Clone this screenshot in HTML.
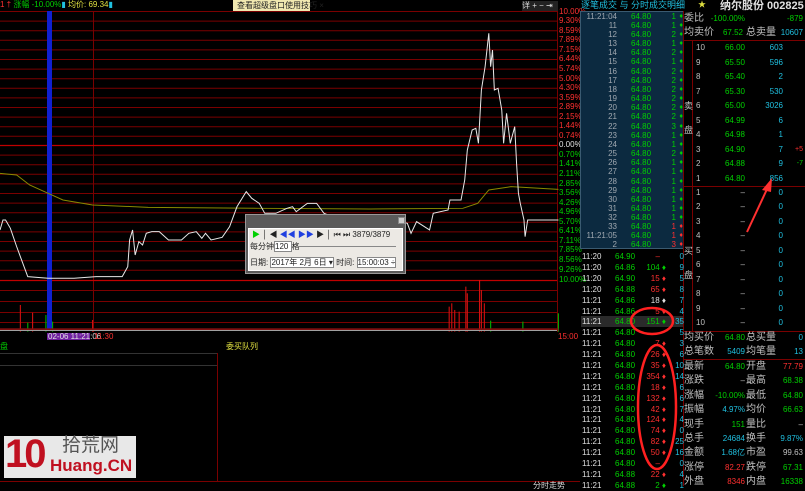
<!DOCTYPE html>
<html><head><meta charset="utf-8"><style>
*{margin:0;padding:0;box-sizing:border-box}
body{width:805px;height:486px;background:#000;overflow:hidden;position:relative;font-family:"Liberation Sans","Noto Sans CJK SC",sans-serif;font-size:8px;color:#ccc}
.a{position:absolute;white-space:nowrap;line-height:10px}
.g{color:#00d000}.r{color:#ff3030}.y{color:#e0e040}.c{color:#20c0e0}.w{color:#e0e0e0}.gr{color:#c0c0c0}
.ax{position:absolute;left:559px;font-size:8px;line-height:8px}
.lr{position:absolute;left:580px;width:104px;height:9px;font-size:8px;line-height:9px}
.lr span{position:absolute}
.t1{right:67px;color:#a0a8b0}.p1{left:51px;color:#00d000}.v1{right:8px}.ar1{right:1px;font-size:7px}
.br{position:absolute;left:580px;width:104px;height:11px;font-size:8px;line-height:11px}
.br span{position:absolute}
.rp{position:absolute;left:684px;width:121px;height:12px;font-size:8px;line-height:12px}
.rp span{position:absolute}
.cn{font-size:10px}
</style></head><body>

<svg class="a" style="left:0;top:0" width="580" height="340">
<g stroke="#7a0000" stroke-width="1">
<line x1="0" y1="11.5" x2="557" y2="11.5"/><line x1="0" y1="21.1" x2="557" y2="21.1"/><line x1="0" y1="30.7" x2="557" y2="30.7"/><line x1="0" y1="40.3" x2="557" y2="40.3"/><line x1="0" y1="49.9" x2="557" y2="49.9"/><line x1="0" y1="59.5" x2="557" y2="59.5"/><line x1="0" y1="69.1" x2="557" y2="69.1"/><line x1="0" y1="78.7" x2="557" y2="78.7"/><line x1="0" y1="88.3" x2="557" y2="88.3"/><line x1="0" y1="97.9" x2="557" y2="97.9"/><line x1="0" y1="107.5" x2="557" y2="107.5"/><line x1="0" y1="117.1" x2="557" y2="117.1"/><line x1="0" y1="126.7" x2="557" y2="126.7"/><line x1="0" y1="136.3" x2="557" y2="136.3"/>
<line x1="0" y1="155.1" x2="557" y2="155.1"/><line x1="0" y1="164.7" x2="557" y2="164.7"/><line x1="0" y1="174.3" x2="557" y2="174.3"/><line x1="0" y1="183.9" x2="557" y2="183.9"/><line x1="0" y1="193.5" x2="557" y2="193.5"/><line x1="0" y1="203.1" x2="557" y2="203.1"/><line x1="0" y1="212.7" x2="557" y2="212.7"/><line x1="0" y1="222.3" x2="557" y2="222.3"/><line x1="0" y1="231.9" x2="557" y2="231.9"/><line x1="0" y1="241.5" x2="557" y2="241.5"/><line x1="0" y1="251.1" x2="557" y2="251.1"/><line x1="0" y1="260.7" x2="557" y2="260.7"/><line x1="0" y1="270.3" x2="557" y2="270.3"/>
<line x1="0" y1="290.5" x2="557" y2="290.5"/><line x1="0" y1="301.5" x2="557" y2="301.5"/><line x1="0" y1="312.5" x2="557" y2="312.5"/><line x1="0" y1="322.5" x2="557" y2="322.5"/>
<line x1="93.5" y1="11" x2="93.5" y2="332"/><line x1="557.5" y1="11" x2="557.5" y2="332"/>
</g>
<line x1="0" y1="145.5" x2="557" y2="145.5" stroke="#c00000" stroke-width="1.3"/>
<line x1="0" y1="280.5" x2="557" y2="280.5" stroke="#c00000" stroke-width="1.3"/>
<rect x="47" y="11" width="5" height="320" fill="#1020d0"/>
<g transform="scale(0.3703,0.3333)" fill="none">
<polyline vector-effect="non-scaling-stroke" stroke="#8a8a00" stroke-width="1" points="0,520 45,525 80,555 130,580 170,600 250,615 400,622 700,625 1000,627 1250,625 1290,610 1320,570 1380,560 1508,568"/>
<polyline vector-effect="non-scaling-stroke" stroke="#e8e8e8" stroke-width="1" points="0,690 8,660 15,660 28,685 45,740 55,770 65,800 75,830 130,835 200,835 260,830 330,830 345,800 350,720 358,690 365,765 375,725 385,735 395,700 410,695 430,695 455,720 490,720 510,700 530,695 545,715 555,700 570,720 600,712 620,680 640,620 665,575 680,595 700,610 715,640 745,640 775,625 790,620 800,635 830,610 855,610 875,640 920,660 1000,665 1060,660 1100,670 1110,700 1125,665 1160,690 1170,640 1210,630 1215,600 1245,600 1255,540 1262,450 1275,390 1285,385 1292,430 1300,270 1310,200 1315,150 1320,100 1325,200 1330,150 1335,270 1345,265 1355,330 1360,430 1368,340 1378,430 1390,380 1395,490 1400,580 1405,610 1415,660 1418,710 1425,660 1508,660"/>
<g stroke="#d01010" stroke-width="3">
<line x1="55" y1="995" x2="55" y2="915"/><line x1="88" y1="995" x2="88" y2="938"/><line x1="1213" y1="995" x2="1213" y2="920"/><line x1="1220" y1="995" x2="1220" y2="910"/><line x1="1228" y1="995" x2="1228" y2="930"/><line x1="1240" y1="995" x2="1240" y2="935"/><line x1="1258" y1="995" x2="1258" y2="860"/><line x1="1262" y1="995" x2="1262" y2="880"/><line x1="1295" y1="995" x2="1295" y2="840"/><line x1="1300" y1="995" x2="1300" y2="870"/><line x1="1308" y1="995" x2="1308" y2="910"/><line x1="250" y1="995" x2="250" y2="960"/>
</g>
<g stroke="#00b000" stroke-width="3"><line x1="75" y1="995" x2="75" y2="968"/><line x1="124" y1="995" x2="124" y2="945"/><line x1="142" y1="995" x2="142" y2="965"/><line x1="1412" y1="995" x2="1412" y2="965"/><line x1="1508" y1="995" x2="1508" y2="940"/><line x1="1325" y1="995" x2="1325" y2="962"/></g>
<rect x="0" y="985" width="1508" height="8" fill="#801010"/>
</g>
<line x1="0" y1="330.5" x2="557" y2="330.5" stroke="#a0a0a0"/>
<line x1="0" y1="342.5" x2="580" y2="342.5" stroke="#7a0000"/>
<rect x="47" y="333" width="43" height="8" fill="#7020a0"/>
</svg>
<div class="a" style="left:48px;top:332px;font-size:8px;color:#e0e0e0">02-06 11:21:06</div>
<div class="a r" style="left:94px;top:332px;font-size:8px">11:30</div>
<div class="a r" style="left:558px;top:332px;font-size:8px">15:00</div>

<div class="ax r" style="top:8px">10.00%</div><div class="ax r" style="top:17px">9.30%</div><div class="ax r" style="top:27px">8.59%</div><div class="ax r" style="top:36px">7.89%</div><div class="ax r" style="top:46px">7.15%</div><div class="ax r" style="top:55px">6.44%</div><div class="ax r" style="top:65px">5.74%</div><div class="ax r" style="top:75px">5.00%</div><div class="ax r" style="top:84px">4.30%</div><div class="ax r" style="top:94px">3.59%</div><div class="ax r" style="top:103px">2.89%</div><div class="ax r" style="top:113px">2.15%</div><div class="ax r" style="top:122px">1.44%</div><div class="ax r" style="top:132px">0.74%</div><div class="ax w" style="top:141px">0.00%</div>
<div class="ax g" style="top:151px">0.70%</div><div class="ax g" style="top:160px">1.41%</div><div class="ax g" style="top:170px">2.11%</div><div class="ax g" style="top:180px">2.85%</div><div class="ax g" style="top:189px">3.56%</div><div class="ax g" style="top:199px">4.26%</div><div class="ax g" style="top:208px">4.96%</div><div class="ax g" style="top:218px">5.70%</div><div class="ax g" style="top:227px">6.41%</div><div class="ax g" style="top:237px">7.11%</div><div class="ax g" style="top:246px">7.85%</div><div class="ax g" style="top:256px">8.56%</div><div class="ax g" style="top:266px">9.26%</div><div class="ax g" style="top:276px">10.00%</div>

<div class="a" style="left:0;top:0;font-size:8px"><span class="r">1 †</span> <span class="g">涨幅 -10.00%</span><span class="c">▮</span> <span class="y">均价: 69.34</span><span class="c">▮</span></div>
<div class="a" style="left:233px;top:0;width:77px;height:11px;background:#f0e8b0;color:#222;font-size:8px;line-height:11px;padding-left:4px">查看超级盘口使用技巧 ×</div>
<div class="a" style="left:522px;top:1px;width:36px;height:10px;font-size:8px;color:#ddd;background:#222">详 + − ⇥</div>
<div class="a g" style="left:0;top:342px;font-size:8px">盘</div>
<div class="a y" style="left:226px;top:342px;font-size:8px">委买队列</div>
<div class="a" style="left:0;top:353px;width:217px;height:1px;background:#333"></div>
<div class="a" style="left:0;top:365px;width:217px;height:1px;background:#333"></div>
<div class="a" style="left:217px;top:353px;width:1px;height:128px;background:#7a0000"></div>
<div class="a" style="left:0;top:481px;width:580px;height:1px;background:#7a0000"></div>
<div class="a" style="left:533px;top:481px;font-size:8px;color:#ddd">分时走势</div>

<div class="a" style="left:4px;top:436px;width:132px;height:42px;background:#e8e8e8"></div>
<div class="a" style="left:5px;top:432px;font:bold 40px/44px 'Liberation Sans',sans-serif;color:#c01020;letter-spacing:-3px">10</div>
<div class="a" style="left:62px;top:436px;font-size:19px;line-height:20px;color:#555">拾荒网</div>
<div class="a" style="left:50px;top:456px;font:bold 17px/20px 'Liberation Sans',sans-serif;color:#c01020">Huang.CN</div>

<div class="a" style="left:245px;top:214px;width:161px;height:60px;background:#5a5a5a;border:1px solid #999"></div>
<div class="a" style="left:398px;top:217px;width:7px;height:7px;background:#ccc;border:1px solid #888"></div>
<div class="a" style="left:248px;top:228px;width:155px;height:43px;background:#ece9e4;border:1px solid #fff"></div>
<div class="a" style="left:252px;top:230px;font-size:8px;color:#222"><span class="g">▶</span> │ ◀ <span style="color:#2040e0">◀◀ ▶▶</span> ▶ │ ⏮ ⏭ 3879/3879</div>
<div class="a" style="left:250px;top:242px;font-size:8px;color:#222">每分钟<span style="background:#fff;border:1px solid #888">120 </span> 格</div>
<div class="a" style="left:298px;top:246px;width:98px;height:1px;background:#888"></div>
<div class="a" style="left:250px;top:258px;font-size:8px;color:#222">日期: <span style="background:#fff;border:1px solid #888">2017年 2月 6日 ▾</span> 时间: <span style="background:#fff;border:1px solid #888">15:00:03 ÷</span></div>

<div class="a c" style="left:581px;top:0;font-size:9px">逐笔成交 与 分时成交明细</div>
<div class="a y" style="left:698px;top:0">★</div>
<div class="a w" style="left:720px;top:0;font-size:11px;line-height:12px;font-weight:bold">纳尔股份 002825</div>
<div class="a" style="left:580px;top:11px;width:104px;height:238px;background:#0c2a40;border:1px solid #3a5a70"></div>
<div class="a" style="left:683px;top:11px;width:1px;height:475px;background:#7a0000"></div>

<div class="lr" style="top:12px"><span class="t1">11:21:04</span><span class="p1">64.80</span><span class="v1 g">1</span><span class="ar1 g">♦</span></div>
<div class="lr" style="top:21px"><span class="t1 y">11</span><span class="p1">64.80</span><span class="v1 g">1</span><span class="ar1 g">♦</span></div>
<div class="lr" style="top:30px"><span class="t1 y">12</span><span class="p1">64.80</span><span class="v1 g">2</span><span class="ar1 g">♦</span></div>
<div class="lr" style="top:39px"><span class="t1 y">13</span><span class="p1">64.80</span><span class="v1 g">1</span><span class="ar1 g">♦</span></div>
<div class="lr" style="top:48px"><span class="t1 y">14</span><span class="p1">64.80</span><span class="v1 g">2</span><span class="ar1 g">♦</span></div>
<div class="lr" style="top:57px"><span class="t1 y">15</span><span class="p1">64.80</span><span class="v1 g">1</span><span class="ar1 g">♦</span></div>
<div class="lr" style="top:67px"><span class="t1 y">16</span><span class="p1">64.80</span><span class="v1 g">2</span><span class="ar1 g">♦</span></div>
<div class="lr" style="top:76px"><span class="t1 y">17</span><span class="p1">64.80</span><span class="v1 g">2</span><span class="ar1 g">♦</span></div>
<div class="lr" style="top:85px"><span class="t1 y">18</span><span class="p1">64.80</span><span class="v1 g">2</span><span class="ar1 g">♦</span></div>
<div class="lr" style="top:94px"><span class="t1 y">19</span><span class="p1">64.80</span><span class="v1 g">2</span><span class="ar1 g">♦</span></div>
<div class="lr" style="top:103px"><span class="t1 y">20</span><span class="p1">64.80</span><span class="v1 g">2</span><span class="ar1 g">♦</span></div>
<div class="lr" style="top:112px"><span class="t1 y">21</span><span class="p1">64.80</span><span class="v1 g">2</span><span class="ar1 g">♦</span></div>
<div class="lr" style="top:122px"><span class="t1 y">22</span><span class="p1">64.80</span><span class="v1 g">3</span><span class="ar1 g">♦</span></div>
<div class="lr" style="top:131px"><span class="t1 y">23</span><span class="p1">64.80</span><span class="v1 g">1</span><span class="ar1 g">♦</span></div>
<div class="lr" style="top:140px"><span class="t1 y">24</span><span class="p1">64.80</span><span class="v1 g">1</span><span class="ar1 g">♦</span></div>
<div class="lr" style="top:149px"><span class="t1 y">25</span><span class="p1">64.80</span><span class="v1 g">2</span><span class="ar1 g">♦</span></div>
<div class="lr" style="top:158px"><span class="t1 y">26</span><span class="p1">64.80</span><span class="v1 g">1</span><span class="ar1 g">♦</span></div>
<div class="lr" style="top:167px"><span class="t1 y">27</span><span class="p1">64.80</span><span class="v1 g">1</span><span class="ar1 g">♦</span></div>
<div class="lr" style="top:177px"><span class="t1 y">28</span><span class="p1">64.80</span><span class="v1 g">1</span><span class="ar1 g">♦</span></div>
<div class="lr" style="top:186px"><span class="t1 y">29</span><span class="p1">64.80</span><span class="v1 g">1</span><span class="ar1 g">♦</span></div>
<div class="lr" style="top:195px"><span class="t1 y">30</span><span class="p1">64.80</span><span class="v1 g">1</span><span class="ar1 g">♦</span></div>
<div class="lr" style="top:204px"><span class="t1 y">31</span><span class="p1">64.80</span><span class="v1 g">1</span><span class="ar1 g">♦</span></div>
<div class="lr" style="top:213px"><span class="t1 y">32</span><span class="p1">64.80</span><span class="v1 g">1</span><span class="ar1 g">♦</span></div>
<div class="lr" style="top:222px"><span class="t1 y">33</span><span class="p1">64.80</span><span class="v1 r">1</span><span class="ar1 r">♦</span></div>
<div class="lr" style="top:231px"><span class="t1">11:21:05</span><span class="p1">64.80</span><span class="v1 r">1</span><span class="ar1 r">♦</span></div>
<div class="lr" style="top:240px"><span class="t1 y">2</span><span class="p1">64.80</span><span class="v1 r">3</span><span class="ar1 r">♦</span></div>

<div class="a" style="left:581px;top:316px;width:102px;height:11px;background:#2a2a2a"></div>
<div class="br" style="top:251px"><span style="left:2px" class="w">11:20</span><span style="left:35px" class="g">64.90</span><span style="right:24px" class="r">–</span><span style="right:0" class="c">0</span></div>
<div class="br" style="top:262px"><span style="left:2px" class="w">11:20</span><span style="left:35px" class="g">64.86</span><span style="right:18px" class="g">104 ♦</span><span style="right:0" class="c">9</span></div>
<div class="br" style="top:273px"><span style="left:2px" class="w">11:20</span><span style="left:35px" class="g">64.90</span><span style="right:18px" class="r">15 ♦</span><span style="right:0" class="c">5</span></div>
<div class="br" style="top:284px"><span style="left:2px" class="w">11:20</span><span style="left:35px" class="g">64.88</span><span style="right:18px" class="r">65 ♦</span><span style="right:0" class="c">8</span></div>
<div class="br" style="top:295px"><span style="left:2px" class="w">11:21</span><span style="left:35px" class="g">64.86</span><span style="right:18px" class="w">18 ♦</span><span style="right:0" class="c">7</span></div>
<div class="br" style="top:306px"><span style="left:2px" class="w">11:21</span><span style="left:35px" class="g">64.86</span><span style="right:18px" class="r">5 ♦</span><span style="right:0" class="c">4</span></div>
<div class="br" style="top:316px"><span style="left:2px" class="w">11:21</span><span style="left:35px" class="g">64.80</span><span style="right:18px" class="g">151 ♦</span><span style="right:0" class="c">35</span></div>
<div class="br" style="top:327px"><span style="left:2px" class="w">11:21</span><span style="left:35px" class="g">64.80</span><span style="right:0" class="c">5</span></div>
<div class="br" style="top:338px"><span style="left:2px" class="w">11:21</span><span style="left:35px" class="g">64.80</span><span style="right:18px" class="r">7 ♦</span><span style="right:0" class="c">3</span></div>
<div class="br" style="top:349px"><span style="left:2px" class="w">11:21</span><span style="left:35px" class="g">64.80</span><span style="right:18px" class="r">26 ♦</span><span style="right:0" class="c">6</span></div>
<div class="br" style="top:360px"><span style="left:2px" class="w">11:21</span><span style="left:35px" class="g">64.80</span><span style="right:18px" class="r">35 ♦</span><span style="right:0" class="c">10</span></div>
<div class="br" style="top:371px"><span style="left:2px" class="w">11:21</span><span style="left:35px" class="g">64.80</span><span style="right:18px" class="r">354 ♦</span><span style="right:0" class="c">14</span></div>
<div class="br" style="top:382px"><span style="left:2px" class="w">11:21</span><span style="left:35px" class="g">64.80</span><span style="right:18px" class="r">18 ♦</span><span style="right:0" class="c">6</span></div>
<div class="br" style="top:393px"><span style="left:2px" class="w">11:21</span><span style="left:35px" class="g">64.80</span><span style="right:18px" class="r">132 ♦</span><span style="right:0" class="c">6</span></div>
<div class="br" style="top:404px"><span style="left:2px" class="w">11:21</span><span style="left:35px" class="g">64.80</span><span style="right:18px" class="r">42 ♦</span><span style="right:0" class="c">7</span></div>
<div class="br" style="top:414px"><span style="left:2px" class="w">11:21</span><span style="left:35px" class="g">64.80</span><span style="right:18px" class="r">124 ♦</span><span style="right:0" class="c">4</span></div>
<div class="br" style="top:425px"><span style="left:2px" class="w">11:21</span><span style="left:35px" class="g">64.80</span><span style="right:18px" class="r">74 ♦</span><span style="right:0" class="c">0</span></div>
<div class="br" style="top:436px"><span style="left:2px" class="w">11:21</span><span style="left:35px" class="g">64.80</span><span style="right:18px" class="r">82 ♦</span><span style="right:0" class="c">25</span></div>
<div class="br" style="top:447px"><span style="left:2px" class="w">11:21</span><span style="left:35px" class="g">64.80</span><span style="right:18px" class="r">50 ♦</span><span style="right:0" class="c">16</span></div>
<div class="br" style="top:458px"><span style="left:2px" class="w">11:21</span><span style="left:35px" class="g">64.80</span><span style="right:24px" class="r">–</span><span style="right:0" class="c">0</span></div>
<div class="br" style="top:469px"><span style="left:2px" class="w">11:21</span><span style="left:35px" class="g">64.88</span><span style="right:18px" class="r">22 ♦</span><span style="right:0" class="c">4</span></div>
<div class="br" style="top:480px"><span style="left:2px" class="w">11:21</span><span style="left:35px" class="g">64.88</span><span style="right:18px" class="g">2 ♦</span><span style="right:0" class="c">1</span></div>

<div class="rp" style="top:13px"><span style="left:0" class="gr cn">委比</span><span style="right:60px" class="g">-100.00%</span><span style="right:2px" class="g">-879</span></div>
<div class="rp" style="top:27px"><span style="left:0" class="gr cn">均卖价</span><span style="right:62px" class="g">67.52</span><span style="left:62px" class="gr cn">总卖量</span><span style="right:2px" class="c">10607</span></div>
<div class="a" style="left:684px;top:40px;width:121px;height:1px;background:#7a0000"></div>
<div class="a" style="left:692px;top:40px;width:1px;height:292px;background:#7a0000"></div>
<div class="a gr" style="left:684px;top:100px;font-size:9px;line-height:12px;width:9px;white-space:normal">卖<br><br>盘</div>
<div class="a gr" style="left:684px;top:245px;font-size:9px;line-height:12px;width:9px;white-space:normal">买<br><br>盘</div>
<div class="rp" style="top:42px"><span style="left:12px" class="gr">10</span><span style="right:60px" class="g">66.00</span><span style="right:22px" class="c">603</span></div>
<div class="rp" style="top:57px"><span style="left:12px" class="gr">9</span><span style="right:60px" class="g">65.50</span><span style="right:22px" class="c">596</span></div>
<div class="rp" style="top:71px"><span style="left:12px" class="gr">8</span><span style="right:60px" class="g">65.40</span><span style="right:22px" class="c">2</span></div>
<div class="rp" style="top:86px"><span style="left:12px" class="gr">7</span><span style="right:60px" class="g">65.30</span><span style="right:22px" class="c">530</span></div>
<div class="rp" style="top:100px"><span style="left:12px" class="gr">6</span><span style="right:60px" class="g">65.00</span><span style="right:22px" class="c">3026</span></div>
<div class="rp" style="top:115px"><span style="left:12px" class="gr">5</span><span style="right:60px" class="g">64.99</span><span style="right:22px" class="c">6</span></div>
<div class="rp" style="top:129px"><span style="left:12px" class="gr">4</span><span style="right:60px" class="g">64.98</span><span style="right:22px" class="c">1</span></div>
<div class="rp" style="top:144px"><span style="left:12px" class="gr">3</span><span style="right:60px" class="g">64.90</span><span style="right:22px" class="c">7</span><span style="right:2px;font-size:7px" class="r">+5</span></div>
<div class="rp" style="top:158px"><span style="left:12px" class="gr">2</span><span style="right:60px" class="g">64.88</span><span style="right:22px" class="c">9</span><span style="right:2px;font-size:7px" class="g">-7</span></div>
<div class="rp" style="top:173px"><span style="left:12px" class="gr">1</span><span style="right:60px" class="g">64.80</span><span style="right:22px" class="c">856</span></div>
<div class="a" style="left:684px;top:186px;width:121px;height:1px;background:#7a0000"></div>
<div class="rp" style="top:187px"><span style="left:12px" class="gr">1</span><span style="right:60px" class="gr">–</span><span style="right:22px" class="c">0</span></div>
<div class="rp" style="top:201px"><span style="left:12px" class="gr">2</span><span style="right:60px" class="gr">–</span><span style="right:22px" class="c">0</span></div>
<div class="rp" style="top:216px"><span style="left:12px" class="gr">3</span><span style="right:60px" class="gr">–</span><span style="right:22px" class="c">0</span></div>
<div class="rp" style="top:230px"><span style="left:12px" class="gr">4</span><span style="right:60px" class="gr">–</span><span style="right:22px" class="c">0</span></div>
<div class="rp" style="top:245px"><span style="left:12px" class="gr">5</span><span style="right:60px" class="gr">–</span><span style="right:22px" class="c">0</span></div>
<div class="rp" style="top:259px"><span style="left:12px" class="gr">6</span><span style="right:60px" class="gr">–</span><span style="right:22px" class="c">0</span></div>
<div class="rp" style="top:274px"><span style="left:12px" class="gr">7</span><span style="right:60px" class="gr">–</span><span style="right:22px" class="c">0</span></div>
<div class="rp" style="top:288px"><span style="left:12px" class="gr">8</span><span style="right:60px" class="gr">–</span><span style="right:22px" class="c">0</span></div>
<div class="rp" style="top:303px"><span style="left:12px" class="gr">9</span><span style="right:60px" class="gr">–</span><span style="right:22px" class="c">0</span></div>
<div class="rp" style="top:317px"><span style="left:12px" class="gr">10</span><span style="right:60px" class="gr">–</span><span style="right:22px" class="c">0</span></div>
<div class="a" style="left:684px;top:331px;width:121px;height:1px;background:#7a0000"></div>
<div class="rp" style="top:332px"><span style="left:0" class="gr cn">均买价</span><span style="right:60px" class="g">64.80</span><span style="left:62px" class="gr cn">总买量</span><span style="right:2px" class="c">0</span></div>
<div class="rp" style="top:346px"><span style="left:0" class="gr cn">总笔数</span><span style="right:60px" class="c">5409</span><span style="left:62px" class="gr cn">均笔量</span><span style="right:2px" class="c">13</span></div>
<div class="a" style="left:684px;top:359px;width:121px;height:1px;background:#7a0000"></div>
<div class="rp" style="top:361px"><span style="left:0" class="gr cn">最新</span><span style="right:60px" class="g">64.80</span><span style="left:62px" class="gr cn">开盘</span><span style="right:2px" class="r">77.79</span></div>
<div class="rp" style="top:375px"><span style="left:0" class="gr cn">涨跌</span><span style="right:60px" class="gr">–</span><span style="left:62px" class="gr cn">最高</span><span style="right:2px" class="g">68.38</span></div>
<div class="rp" style="top:390px"><span style="left:0" class="gr cn">涨幅</span><span style="right:60px" class="g">-10.00%</span><span style="left:62px" class="gr cn">最低</span><span style="right:2px" class="g">64.80</span></div>
<div class="rp" style="top:404px"><span style="left:0" class="gr cn">振幅</span><span style="right:60px" class="c">4.97%</span><span style="left:62px" class="gr cn">均价</span><span style="right:2px" class="g">66.63</span></div>
<div class="rp" style="top:419px"><span style="left:0" class="gr cn">现手</span><span style="right:60px" class="g">151</span><span style="left:62px" class="gr cn">量比</span><span style="right:2px" class="gr">–</span></div>
<div class="rp" style="top:433px"><span style="left:0" class="gr cn">总手</span><span style="right:60px" class="c">24684</span><span style="left:62px" class="gr cn">换手</span><span style="right:2px" class="c">9.87%</span></div>
<div class="rp" style="top:447px"><span style="left:0" class="gr cn">金额</span><span style="right:60px" class="c">1.68亿</span><span style="left:62px" class="gr cn">市盈</span><span style="right:2px" class="gr">99.63</span></div>
<div class="rp" style="top:462px"><span style="left:0" class="gr cn">涨停</span><span style="right:60px" class="r">82.27</span><span style="left:62px" class="gr cn">跌停</span><span style="right:2px" class="g">67.31</span></div>
<div class="rp" style="top:476px"><span style="left:0" class="gr cn">外盘</span><span style="right:60px" class="r">8346</span><span style="left:62px" class="gr cn">内盘</span><span style="right:2px" class="g">16338</span></div>

<svg class="a" style="left:0;top:0" width="805" height="486">
<ellipse cx="652" cy="321" rx="21" ry="13" fill="none" stroke="#ff2020" stroke-width="2.5"/>
<ellipse cx="657" cy="407" rx="19" ry="62" fill="none" stroke="#ff2020" stroke-width="2.5"/>
<line x1="747" y1="232" x2="768" y2="187" stroke="#ff3030" stroke-width="2"/>
<polygon points="772,178 762,190 771,192" fill="#ff3030"/>
</svg>
</body></html>
